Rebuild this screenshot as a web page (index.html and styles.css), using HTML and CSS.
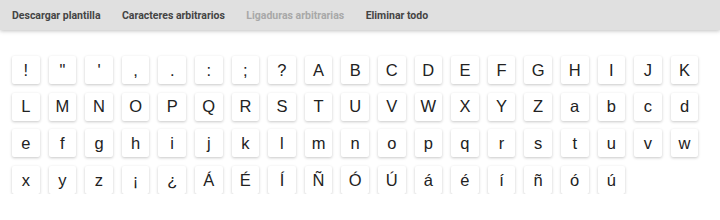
FILE: index.html
```html
<!DOCTYPE html>
<html lang="es">
<head>
    <meta charset="UTF-8">
    <title>Plantilla</title>
    <link rel="stylesheet" href="styles.css">
</head>
<body>
    <div class="toolbar">
        <span class="tool">Descargar plantilla</span>
        <span class="tool">Caracteres arbitrarios</span>
        <span class="tool disabled">Ligaduras arbitrarias</span>
        <span class="tool">Eliminar todo</span>
    </div>
    <div class="keys" id="keys"></div>

    <script>
        const chars = ['!', '"', "'", ',', '.', ':', ';', '?',
            'A','B','C','D','E','F','G','H','I','J','K','L','M','N','O','P','Q','R','S','T','U','V','W','X','Y','Z',
            'a','b','c','d','e','f','g','h','i','j','k','l','m','n','o','p','q','r','s','t','u','v','w','x','y','z',
            '¡','¿','Á','É','Í','Ñ','Ó','Ú','á','é','í','ñ','ó','ú'];
        const keys = document.getElementById('keys');
        chars.forEach(c => {
            const k = document.createElement('div');
            k.className = 'key';
            k.textContent = c;
            keys.appendChild(k);
        });
    </script>
</body>
</html>
```

FILE: styles.css
```css
body {
    margin: 0;
    background: #fff;
    font-family: "Liberation Sans", Arial, sans-serif;
}
.toolbar {
    display: flex;
    align-items: center;
    gap: 21.5px;
    height: 30px;
    padding-left: 12px;
    background: #e0e0e0;
    box-shadow: 0 1px 4px rgba(0, 0, 0, 0.25);
    font-family: Roboto, "Liberation Sans", sans-serif;
    font-weight: 700;
    font-size: 10.5px;
    color: #444;
}
.tool.disabled {
    color: #a8a8a8;
}
.keys {
    display: flex;
    flex-wrap: wrap;
    column-gap: 9px;
    row-gap: 8.7px;
    padding: 26px 12px 0 12px;
    width: 700px;
}
.key {
    width: 27.6px;
    height: 28px;
    background: #fff;
    border-radius: 2px;
    box-shadow: 0 1px 3px rgba(0, 0, 0, 0.22);
    display: flex;
    align-items: center;
    justify-content: center;
    font-size: 16.5px;
    color: #222;
}
```
